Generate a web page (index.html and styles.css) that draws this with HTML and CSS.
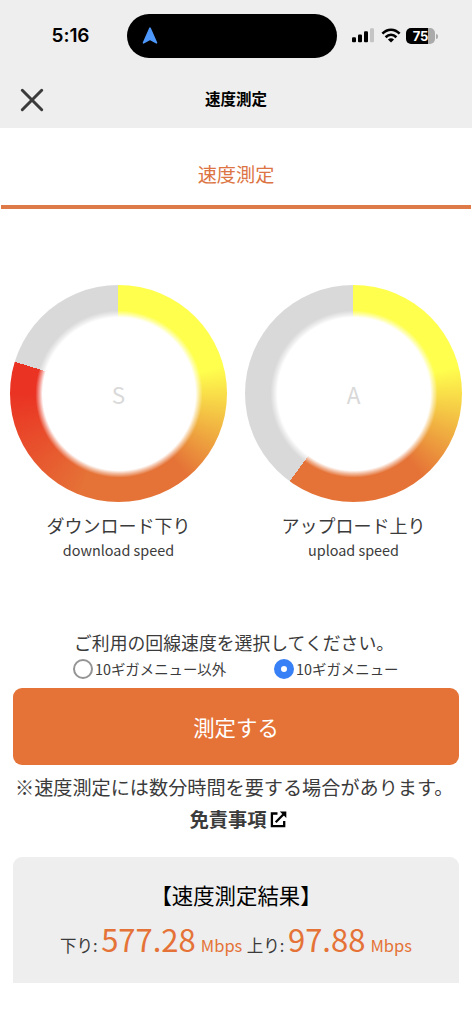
FILE: index.html
```html
<!DOCTYPE html>
<html lang="ja">
<head>
<meta charset="utf-8">
<title>速度測定</title>
<link rel="stylesheet" href="styles.css">
</head>
<body>
<header class="header">
  <div class="status">
    <div class="clock">5:16</div>
    <div class="island">
      <svg class="nav-arrow" width="16" height="18" viewBox="0 0 16 18"><path d="M8 1.2 14.5 15.8 8 12.3 1.5 15.8Z" fill="#4e98fb" stroke="#4e98fb" stroke-width="1.6" stroke-linejoin="round"/></svg>
    </div>
    <div class="indicators">
      <svg width="23" height="16" viewBox="0 0 23 16"><rect x="0" y="9.3" width="4" height="5" rx="1.1"/><rect x="6" y="6.6" width="4" height="7.7" rx="1.1"/><rect x="12" y="3.3" width="4" height="11" rx="1.1"/><rect x="18" y="0.3" width="4" height="14" rx="1.1" fill="#c4c4c4"/></svg>
      <svg class="wifi" width="20" height="16" viewBox="0 0 20 16"><g fill="none" stroke="#000" stroke-width="2.6"><path d="M1.4 5.7C6.4.5 13.6.5 18.6 5.7"/><path d="M4.6 9.2C7.9 6 12.1 6 15.4 9.2"/></g><path d="M6.9 11.5Q10 8.8 13.1 11.5L10 14.5Z"/></svg>
      <div class="battery"><span class="level">75</span></div>
      <span class="battery-tip"></span>
    </div>
  </div>
  <div class="title-bar">
    <svg class="close" width="24" height="24" viewBox="0 0 24 24"><path d="M2.3 2.3 21.7 21.7M21.7 2.3 2.3 21.7" stroke="#3b3b3b" stroke-width="3" stroke-linecap="round"/></svg>
    <h1 class="title">速度測定</h1>
  </div>
</header>
<main>
  <div class="tab">速度測定</div>
  <section class="gauges">
    <div class="gauge">
      <div class="ring download"><div class="hole">S</div></div>
      <div class="label">ダウンロード下り</div>
      <div class="sub">download speed</div>
    </div>
    <div class="gauge">
      <div class="ring upload"><div class="hole">A</div></div>
      <div class="label">アップロード上り</div>
      <div class="sub">upload speed</div>
    </div>
  </section>
  <p class="prompt">ご利用の回線速度を選択してください。</p>
  <div class="options">
    <label class="option"><span class="radio"></span>10ギガメニュー以外</label>
    <label class="option"><span class="radio checked"></span>10ギガメニュー</label>
  </div>
  <button class="start">測定する</button>
  <p class="note">※速度測定には数分時間を要する場合があります。</p>
  <a class="terms">免責事項<svg width="17" height="17" viewBox="0 0 17 17" fill="none" stroke="#000" stroke-width="2.3"><path d="M7.5 2.5H1.9V15.2H14.2V10"/><path d="M5.7 11.2 13.6 3.3"/><path d="M9.8.5H16.3V7Z" fill="#000" stroke="none"/></svg></a>
  <section class="result">
    <h2 class="result-title">【速度測定結果】</h2>
    <div class="speeds"><span>下り:</span><span class="value">577.28</span><span class="unit">Mbps</span><span class="second">上り:</span><span class="value">97.88</span><span class="unit">Mbps</span></div>
  </section>
</main>
</body>
</html>
```
FILE: styles.css
```css
* { box-sizing: border-box; }
body {
  margin: 0;
  background: #fff;
  color: #3b3b3b;
  font-family: "Noto Sans CJK JP", sans-serif;
}
h1, h2, p { margin: 0; }
svg { display: block; flex: none; }
.header { height: 128px; background: #eee; }
.status {
  height: 72px;
  display: grid;
  grid-template-columns: 127px 210px 135px;
  align-items: center;
}
.clock {
  padding-left: 14px;
  text-align: center;
  font: 600 19px/24px Inter, sans-serif;
  letter-spacing: -0.1px;
  color: #000;
}
.island {
  height: 44px;
  border-radius: 22px;
  background: #000;
  display: flex;
  align-items: center;
  padding-left: 15px;
}
.indicators { display: flex; align-items: center; padding-left: 15px; }
.wifi { margin-left: 6px; }
.battery {
  width: 29px;
  height: 16px;
  margin-left: 5px;
  border-radius: 5px;
  background: linear-gradient(90deg, #000 75%, #aaa 75%);
  display: flex;
  justify-content: center;
  align-items: center;
}
.level { font: 700 13px/16px Inter, sans-serif; color: #fff; letter-spacing: -0.2px; }
.battery-tip { width: 2px; height: 5px; margin-left: 1px; border-radius: 0 2px 2px 0; background: #aaa; }
.title-bar {
  height: 56px;
  display: grid;
  grid-template-columns: 64px 1fr 64px;
  align-items: center;
}
.close { margin-left: 20px; }
.title { font-size: 15.5px; line-height: 24px; font-weight: 700; color: #000; text-align: center; margin-top: -4px; }
.tab {
  height: 81px;
  margin: 0 1px;
  padding-top: 32px;
  border-bottom: 4px solid #dd7a47;
  font-size: 19.2px;
  line-height: 28px;
  text-align: center;
  color: #dc7443;
}
.gauges { display: grid; grid-template-columns: 235px 235px; padding: 76px 1px 0; }
.gauge { display: flex; flex-direction: column; align-items: center; }
.ring {
  width: 217px;
  height: 217px;
  border-radius: 50%;
  display: grid;
  place-items: center;
}
.download { background: conic-gradient(#ffff4e 0 75deg, #e57337 140deg 200deg, #ea3323 270deg 287deg, #d9d9d9 287deg); }
.upload { background: conic-gradient(#ffff4e 0 75deg, #e57337 140deg 216deg, #d9d9d9 216deg); }
.hole {
  width: 168px;
  height: 168px;
  border-radius: 50%;
  background: radial-gradient(circle closest-side, #fff 91%, rgb(255 255 255 / 0.5) 95%, rgb(255 255 255 / 0) 99.5%);
  text-align: center;
  font-size: 22.5px;
  line-height: 168px;
  color: #d9d9d9;
}
.label { margin-top: 10px; font-size: 18px; line-height: 26px; }
.sub { margin-top: 1px; font-size: 14.4px; line-height: 22px; }
.prompt { margin-top: 68px; padding-left: 74px; font-size: 17.85px; line-height: 26px; }
.options { display: flex; gap: 48px; padding-left: 73px; height: 33px; align-items: center; margin-top: -3px; }
.option { display: flex; align-items: center; gap: 2px; font-size: 14.4px; line-height: 20px; }
.radio { width: 20px; height: 20px; border: 2px solid #949494; border-radius: 50%; }
.checked { border: 7px solid #3880f5; }
.start {
  display: block;
  width: 446px;
  height: 77px;
  margin: 3px 0 0 13px;
  padding: 0;
  border: 0;
  border-radius: 9px;
  background: #e57337;
  color: #fff;
  font: 21.4px/77px "Noto Sans CJK JP", sans-serif;
}
.note { margin-top: 7px; padding-left: 15px; font-size: 19.15px; line-height: 30px; white-space: nowrap; }
.terms {
  display: flex;
  align-items: center;
  justify-content: center;
  gap: 4px;
  margin-top: 3px;
  padding-left: 5px;
  font-size: 19.2px;
  line-height: 28px;
  font-weight: 700;
}
.result {
  height: 126px;
  margin: 24px 13px 0;
  padding-top: 22px;
  border-radius: 9px 9px 0 0;
  background: #eee;
}
.result-title { font-size: 21.4px; line-height: 32px; font-weight: 400; text-align: center; color: #000; }
.speeds { display: flex; align-items: baseline; justify-content: center; font-size: 16.5px; line-height: 56px; }
.value { margin-left: 3.5px; font-size: 31px; color: #e57337; }
.unit { margin-left: 5px; color: #e57337; }
.second { margin-left: 4.5px; }
```
